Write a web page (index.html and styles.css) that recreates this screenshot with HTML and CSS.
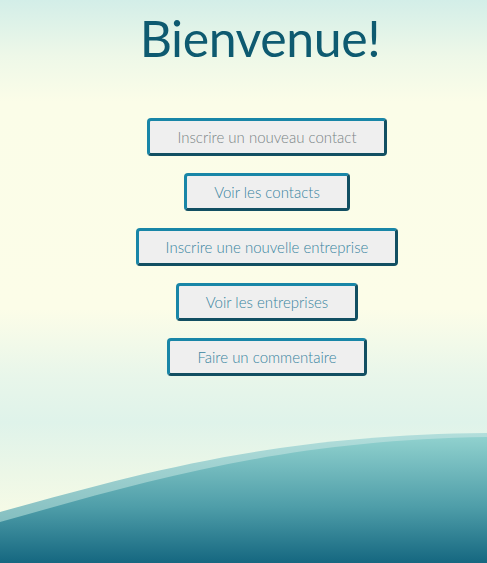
FILE: index.html
```html
<!DOCTYPE html>
<html lang="fr">
<head>
<meta charset="utf-8">
<title>Bienvenue</title>
<link rel="stylesheet" href="styles.css">
</head>
<body>
<main class="page">
  <h1 class="title">Bienvenue!</h1>
  <nav class="menu">
    <button class="btn btn-muted">Inscrire un nouveau contact</button>
    <button class="btn">Voir les contacts</button>
    <button class="btn">Inscrire une nouvelle entreprise</button>
    <button class="btn">Voir les entreprises</button>
    <button class="btn">Faire un commentaire</button>
  </nav>
</main>
<svg class="wave" viewBox="0 0 487 133" preserveAspectRatio="none" aria-hidden="true">
  <defs>
    <linearGradient id="front" x1="0" y1="0" x2="0" y2="1">
      <stop offset="0" stop-color="#90d1ce"/>
      <stop offset="0.55" stop-color="#4f9ea9"/>
      <stop offset="1" stop-color="#156780"/>
    </linearGradient>
    <linearGradient id="back" x1="0" y1="0" x2="0" y2="1">
      <stop offset="0" stop-color="#b2dedb"/>
      <stop offset="1" stop-color="#6fb0b4"/>
    </linearGradient>
  </defs>
  <path d="M0,82 C150,40 280,5 487,3 L487,133 L0,133 Z" fill="url(#back)"/>
  <path d="M0,92 C150,50 285,10 487,7 L487,133 L0,133 Z" fill="url(#front)"/>
</svg>
</body>
</html>
```

FILE: styles.css
```css
html, body {
  margin: 0;
  padding: 0;
}

body {
  min-height: 100vh;
  font-family: "Lato", "Open Sans", sans-serif;
  background: linear-gradient(180deg,
    #d3eee8 0%,
    #eef8e8 10%,
    #fbfde8 18%,
    #fcfde8 55%,
    #e8f6ea 67%,
    #dff3ea 75%,
    #ecf7e7 84%,
    #f7fbe6 92%);
  overflow: hidden;
}

.page {
  display: flex;
  flex-direction: column;
  align-items: center;
  padding-left: 47px;
}

.title {
  margin: 5px 14px 0 0;
  font-family: "Lato", sans-serif;
  font-weight: 400;
  font-size: 50px;
  line-height: 66px;
  color: #0e5a70;
  letter-spacing: -0.4px;
}

.menu {
  display: flex;
  flex-direction: column;
  align-items: center;
  gap: 17px;
  margin-top: 47px;
}

.btn {
  font-family: "Lato", sans-serif;
  font-weight: 300;
  font-size: 15px;
  line-height: 16px;
  letter-spacing: 0px;
  color: #3884a0;
  background: #efefef;
  padding: 8px 27px 8px;
  border: 3px solid;
  border-color: #1886a7 #124f62 #124f62 #1886a7;
  border-radius: 4px;
}

.btn-muted {
  color: #7a8486;
}

.wave {
  position: absolute;
  left: 0;
  bottom: 0;
  width: 100%;
  height: 133px;
  display: block;
}
```
